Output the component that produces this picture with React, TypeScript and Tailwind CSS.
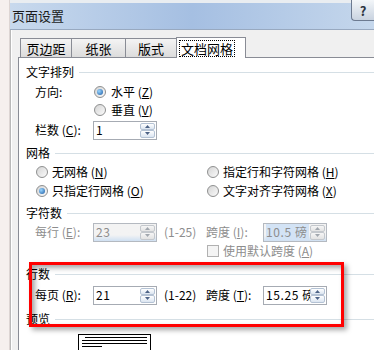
import React from "react";

function Radio({ checked = false }: { checked?: boolean }) {
  return (
    <span className="flex h-[12px] w-[12px] shrink-0 items-center justify-center rounded-full border border-[#8e8f8f] bg-linear-to-br from-[#d4d4d4] to-[#fbfbfb]">
      {checked && (
        <span className="h-[6px] w-[6px] rounded-full bg-[radial-gradient(circle_at_35%_35%,#9ad6ff,#1b5aa3)]" />
      )}
    </span>
  );
}

function Arrow({ up, disabled }: { up?: boolean; disabled?: boolean }) {
  return (
    <div
      className={`flex flex-1 items-center justify-center rounded-[2px] border ${
        disabled
          ? "border-[#c4c8cd] bg-linear-to-b from-[#f6f6f6] to-[#e3e3e3]"
          : "border-[#b4c2d4] bg-linear-to-b from-[#ffffff] to-[#dbe5f1]"
      }`}
    >
      <svg width="5" height="3" viewBox="0 0 5 3">
        <path d={up ? "M0 3 L2.5 0 L5 3 Z" : "M0 0 L5 0 L2.5 3 Z"} fill={disabled ? "#a1a7ae" : "#4c6286"} />
      </svg>
    </div>
  );
}

function Spin({
  value,
  disabled = false,
  selected = false,
}: {
  value: string;
  disabled?: boolean;
  selected?: boolean;
}) {
  return (
    <div
      className={`flex h-[19px] w-[64px] shrink-0 border ${
        disabled
          ? "border-[#b4b9c0] bg-linear-to-b from-[#f3f3f3] from-65% to-[#cfe0f2]"
          : "border-[#a6abb3] bg-white"
      }`}
    >
      <div
        className={`flex min-w-0 flex-1 items-center overflow-hidden whitespace-nowrap pl-[2px] text-[12px] leading-none tracking-[0.6px] ${
          disabled ? "text-[#8d8d8d]" : "text-black"
        }`}
      >
        <span className={selected ? "bg-[#d3e3f5] py-[2px] pr-[1px]" : ""}>{value}</span>
      </div>
      <div className="my-px mr-px flex w-[15px] flex-col">
        <Arrow up disabled={disabled} />
        <Arrow disabled={disabled} />
      </div>
    </div>
  );
}

function Header({ text, mt }: { text: string; mt: string }) {
  return (
    <div className={`flex h-[16px] items-center pl-[7px] ${mt}`}>
      <span className="text-[12px] leading-none">{text}</span>
      <div className="ml-[5px] h-px flex-1 bg-[#d5dfe5]" />
    </div>
  );
}

function Key({ k }: { k: string }) {
  return (
    <>
      {" "}(<span className="underline">{k}</span>)
    </>
  );
}

export default function App() {
  return (
    <div className="relative flex h-[350px] w-[374px] overflow-hidden bg-[#f6f0ee] font-['Noto_Sans_CJK_SC',sans-serif] text-black">
      <div className="w-[10px] shrink-0 border-r border-[#ddd5d3]" />
      <div className="flex min-w-0 flex-1 flex-col">
        {/* title bar */}
        <div className="flex h-[30px] shrink-0 items-start border-t-[3px] border-b border-t-[#e9edf1] border-b-[#98a9c0] bg-linear-to-r from-[#c8d9ed] via-[#a5bfe2] to-[#c5d7ec]">
          <span className="mt-[5px] pl-[2px] text-[13px] leading-[16px] text-[#1b1b1b]">页面设置</span>
          <div className="-mt-[3px] ml-auto flex h-[21px] w-[23px] items-center justify-center rounded-bl-[4px] border border-r-0 border-t-0 border-[#6c7a90] bg-linear-to-b from-[#f3f6f9] to-[#c9d3e0] text-[13px] font-bold leading-none text-[#2c3440]">
            ?
          </div>
        </div>

        {/* dialog body */}
        <div className="flex flex-1 flex-col border-l border-[#b9b9b9] bg-[#f0f0f0]">
          <div className="flex flex-1 flex-col border-l border-white pl-[6px]">
            {/* tabs */}
            <div className="flex h-[27px] shrink-0 items-end pl-[2px] text-[13px] leading-none">
              <div className="flex h-[19px] w-[52px] items-center justify-center border border-b-0 border-[#898c95] bg-linear-to-b from-[#f4f4f4] to-[#dcdcdc]">
                页边距
              </div>
              <div className="-ml-px flex h-[19px] w-[55px] items-center justify-center border border-b-0 border-[#898c95] bg-linear-to-b from-[#f4f4f4] to-[#dcdcdc]">
                纸张
              </div>
              <div className="-ml-px flex h-[19px] w-[52px] items-center justify-center border border-b-0 border-[#898c95] bg-linear-to-b from-[#f4f4f4] to-[#dcdcdc]">
                版式
              </div>
              <div className="relative z-10 -mb-px -ml-px flex h-[21px] w-[70px] items-center border border-b-0 border-[#898c95] bg-white pl-[2px]">
                <span className="border border-dotted border-black px-[1px] py-[1px]">文档网格</span>
              </div>
            </div>

            {/* panel */}
            <div className="flex flex-1 flex-col border-l border-t border-[#898c95] bg-white text-[12px] leading-none">
              <Header text="文字排列" mt="mt-[6px]" />
              <div className="mt-[2px] flex h-[20px] items-center pl-[16px]">
                <span className="w-[59px]">方向:</span>
                <Radio checked />
                <span className="ml-[5px]">
                  水平<Key k="Z" />
                </span>
              </div>
              <div className="flex h-[16px] items-center pl-[75px]">
                <Radio />
                <span className="ml-[5px]">
                  垂直<Key k="V" />
                </span>
              </div>
              <div className="mt-[2px] flex h-[20px] items-center pl-[16px]">
                <span className="w-[58px]">
                  栏数<Key k="C" />:
                </span>
                <Spin value="1" />
              </div>

              <Header text="网格" mt="mt-[5px]" />
              <div className="mt-px flex h-[20px] items-center pl-[17px]">
                <div className="flex w-[171px] items-center">
                  <Radio />
                  <span className="ml-[4px]">
                    无网格<Key k="N" />
                  </span>
                </div>
                <Radio />
                <span className="ml-[4px]">
                  指定行和字符网格<Key k="H" />
                </span>
              </div>
              <div className="flex h-[18px] items-center pl-[17px]">
                <div className="flex w-[171px] items-center">
                  <Radio checked />
                  <span className="ml-[4px]">
                    只指定行网格<Key k="O" />
                  </span>
                </div>
                <Radio />
                <span className="ml-[4px]">
                  文字对齐字符网格<Key k="X" />
                </span>
              </div>

              <Header text="字符数" mt="mt-[5px]" />
              <div className="mt-px flex h-[20px] items-center pl-[16px] text-[#8d8d8d]">
                <span className="w-[58px]">
                  每行<Key k="E" />:
                </span>
                <Spin value="23" disabled />
                <span className="w-[49px] pl-[7px]">(1-25)</span>
                <span className="w-[57px]">
                  跨度<Key k="I" />:
                </span>
                <Spin value="10.5 磅" disabled selected />
              </div>
              <div className="mt-px flex h-[16px] items-center pl-[188px] text-[#8d8d8d]">
                <span className="h-[12px] w-[12px] border border-[#b1b1b1] bg-[#f4f4f4]" />
                <span className="ml-[4px]">
                  使用默认跨度<Key k="A" />
                </span>
              </div>

              <Header text="行数" mt="mt-[7px]" />
              <div className="mt-[3px] flex h-[20px] items-center pl-[16px]">
                <span className="w-[58px]">
                  每页<Key k="R" />:
                </span>
                <Spin value="21" />
                <span className="w-[49px] pl-[7px]">(1-22)</span>
                <span className="w-[57px]">
                  跨度<Key k="T" />:
                </span>
                <Spin value="15.25 磅" />
              </div>

              <Header text="预览" mt="mt-[6px]" />
              <div className="ml-[59px] mt-[7px] flex h-[30px] w-[73px] flex-col gap-[2px] border border-black bg-white px-[3px] pt-[2px]">
                <div className="ml-[3px] h-px bg-black" />
                <div className="h-px bg-black" />
                <div className="h-px bg-black" />
                <div className="h-px w-[20px] bg-black" />
              </div>
            </div>
          </div>
        </div>
      </div>

      {/* red annotation */}
      <div className="pointer-events-none absolute left-[29px] top-[262px] h-[65px] w-[315px] border-[3px] border-[#ff0000] shadow-[3px_3px_5px_rgba(0,0,0,0.35),inset_3px_3px_5px_rgba(0,0,0,0.35)]" />
    </div>
  );
}
